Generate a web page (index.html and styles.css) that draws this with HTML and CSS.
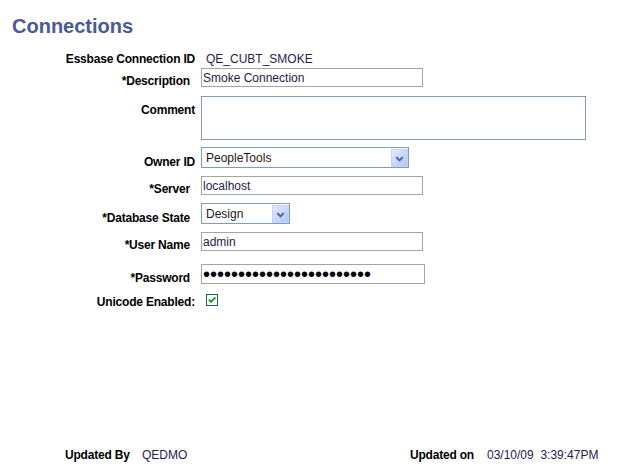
FILE: index.html
```html
<!DOCTYPE html>
<html>
<head>
<meta charset="utf-8">
<title>Connections</title>
<link rel="stylesheet" href="styles.css">
</head>
<body>
<div class="page">
  <h1 class="title">Connections</h1>
  <form class="form">
    <div class="row row-id">
      <span class="label">Essbase Connection ID</span>
      <span class="value">QE_CUBT_SMOKE</span>
    </div>
    <div class="row row-desc">
      <label class="label req">*Description</label>
      <input class="text" type="text" value="Smoke Connection">
    </div>
    <div class="row row-comment">
      <label class="label">Comment</label>
      <textarea class="area"></textarea>
    </div>
    <div class="row row-owner">
      <label class="label">Owner ID</label>
      <div class="select select-owner">
        <select><option>PeopleTools</option></select>
        <span class="select-btn"><svg width="16" height="17" viewBox="0 0 16 17"><path d="M4.5 7 L8 10.5 L11.5 7" fill="none" stroke="#4d6185" stroke-width="2"/></svg></span>
      </div>
    </div>
    <div class="row row-server">
      <label class="label req">*Server</label>
      <input class="text" type="text" value="localhost">
    </div>
    <div class="row row-db">
      <label class="label req">*Database State</label>
      <div class="select select-db">
        <select><option>Design</option></select>
        <span class="select-btn"><svg width="16" height="17" viewBox="0 0 16 17"><path d="M4.5 7 L8 10.5 L11.5 7" fill="none" stroke="#4d6185" stroke-width="2"/></svg></span>
      </div>
    </div>
    <div class="row row-user">
      <label class="label req">*User Name</label>
      <input class="text" type="text" value="admin">
    </div>
    <div class="row row-pw">
      <label class="label req">*Password</label>
      <input class="text pw" type="password" value="abcdefghijklmnopqrstuvwx">
    </div>
    <div class="row row-uni">
      <label class="label">Unicode Enabled:</label>
      <span class="check"><svg width="10" height="10" viewBox="0 0 10 10"><path d="M1.8 4.6 L4 6.8 L8.4 2.4" fill="none" stroke="#21a121" stroke-width="2"/></svg></span>
    </div>
  </form>
  <div class="footer">
    <span class="f-label">Updated By</span>
    <span class="f-value f-by">QEDMO</span>
    <span class="f-label">Updated on</span>
    <span class="f-value">03/10/09&nbsp; 3:39:47PM</span>
  </div>
</div>
</body>
</html>
```
FILE: styles.css
```css
* { box-sizing: border-box; }
html, body { margin: 0; padding: 0; background: #fff; }
body {
  font-family: "Liberation Sans", Arial, sans-serif;
  font-size: 12px;
  color: #000;
}
.page {
  display: flex;
  flex-direction: column;
  min-height: 100vh;
}
.title {
  margin: 14px 0 0 12px;
  font-size: 20px;
  line-height: 24px;
  font-weight: bold;
  color: #4a5b93;
}
.form {
  display: flex;
  flex-direction: column;
  margin-top: 14px;
}
.row {
  display: flex;
  align-items: flex-end;
  column-gap: 6px;
}
.label {
  flex: none;
  width: 195px;
  text-align: right;
  font-weight: bold;
  letter-spacing: -0.2px;
  line-height: 14px;
  margin-bottom: -1px;
}
.label.req { padding-right: 5px; }
.value {
  line-height: 14px;
  padding-left: 5px;
  color: #261a50;
}
.row-id .label { margin-bottom: 0; }
.row-desc { margin-top: 2px; }
.row-comment { margin-top: 9px; align-items: flex-start; }
.row-comment .label { margin: 0; padding-top: 7px; }
.row-owner { margin-top: 7px; }
.row-server { margin-top: 8px; }
.row-db { margin-top: 8px; }
.row-user { margin-top: 8px; }
.row-pw { margin-top: 13px; }
.row-uni { margin-top: 10px; align-items: flex-start; }
.row-uni .label { margin: 0; padding-top: 1px; }

.text {
  margin: 0;
  width: 222px;
  height: 19px;
  padding: 0 1px;
  border: 1px solid #a5a5a5;
  background: #fff;
  font: 12px "Liberation Sans", Arial, sans-serif;
  color: #261a50;
  outline: none;
}
.text.pw {
  width: 224px;
  height: 20px;
  font-size: 20px;
  color: #000;
}
.area {
  margin: 0;
  width: 385px;
  height: 44px;
  padding: 1px;
  border: 1px solid #7f9db9;
  resize: none;
  outline: none;
  font: 12px "Liberation Sans", Arial, sans-serif;
}
.select {
  position: relative;
  height: 21px;
  border: 1px solid #7f9db9;
  background: #fff;
}
.select-owner { width: 208px; }
.select-db { width: 89px; }
.select select {
  -webkit-appearance: none;
  appearance: none;
  display: block;
  width: 100%;
  height: 100%;
  margin: 0;
  padding: 0 0 0 4px;
  border: 0;
  background: transparent;
  font: 12px "Liberation Sans", Arial, sans-serif;
  color: #1a1a1a;
  outline: none;
}
.select-btn {
  position: absolute;
  top: 1px;
  right: 0;
  bottom: 0;
  width: 17px;
  border: 1px solid #c4d3f8;
  background: linear-gradient(135deg, #e4ecfd 0%, #c6d5fa 55%, #b3c7f4 100%);
  pointer-events: none;
  display: flex;
  align-items: center;
  justify-content: center;
}
.check {
  margin-left: 5px;
  width: 12px;
  height: 12px;
  border: 1px solid #1c5180;
  background: #fff;
  display: flex;
  align-items: center;
  justify-content: center;
}
.footer {
  margin-top: auto;
  display: flex;
  padding: 0 0 6px 65px;
  line-height: 14px;
}
.f-label {
  width: 77px;
  font-weight: bold;
  letter-spacing: -0.2px;
}
.f-value { color: #261a50; }
.f-by { width: 268px; }
```
